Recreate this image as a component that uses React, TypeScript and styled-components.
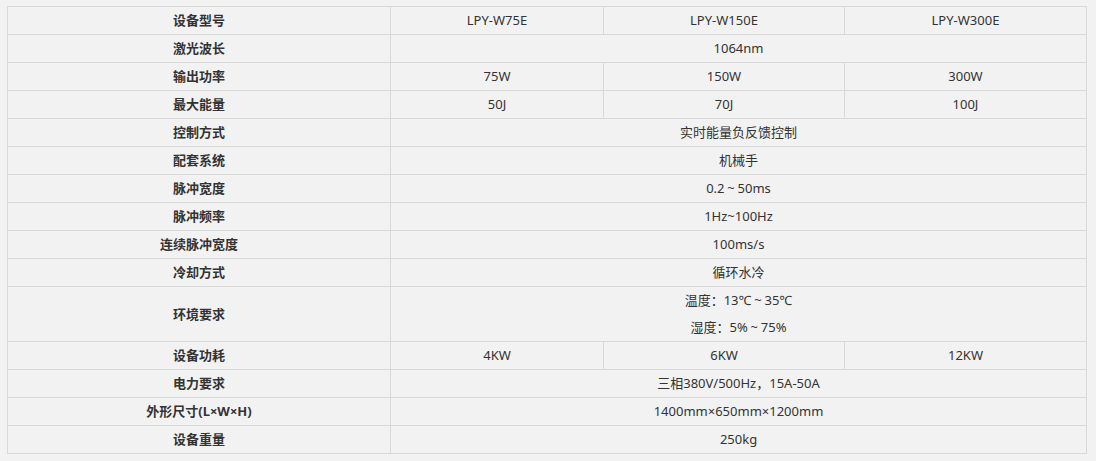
import styled, { createGlobalStyle } from "styled-components";

const GlobalStyle = createGlobalStyle`
  html, body {
    margin: 0;
    background: #f2f2f2;
  }
`;

type Row = {
  label: string;
  values: string[];
};

const rows: Row[] = [
  { label: "设备型号", values: ["LPY-W75E", "LPY-W150E", "LPY-W300E"] },
  { label: "激光波长", values: ["1064nm"] },
  { label: "输出功率", values: ["75W", "150W", "300W"] },
  { label: "最大能量", values: ["50J", "70J", "100J"] },
  { label: "控制方式", values: ["实时能量负反馈控制"] },
  { label: "配套系统", values: ["机械手"] },
  { label: "脉冲宽度", values: ["0.2～50ms"] },
  { label: "脉冲频率", values: ["1Hz~100Hz"] },
  { label: "连续脉冲宽度", values: ["100ms/s"] },
  { label: "冷却方式", values: ["循环水冷"] },
  { label: "环境要求", values: ["温度：13℃～35℃\n湿度：5%～75%"] },
  { label: "设备功耗", values: ["4KW", "6KW", "12KW"] },
  { label: "电力要求", values: ["三相380V/500Hz，15A-50A"] },
  { label: "外形尺寸(L×W×H)", values: ["1400mm×650mm×1200mm"] },
  { label: "设备重量", values: ["250kg"] },
];

const Page = styled.div`
  padding: 6px 9px 7px 7px;
`;

const Table = styled.table`
  width: 100%;
  border-collapse: collapse;
  table-layout: fixed;
  font-family: "Noto Sans", "Noto Sans CJK SC", sans-serif;
  font-size: 13px;
  color: #333;
  background: #f2f2f2;
`;

const Cell = styled.td<{ $head?: boolean }>`
  border: 1px solid #d9d9d9;
  padding: 0;
  line-height: 27px;
  text-align: center;
  vertical-align: middle;
  font-weight: ${(p) => (p.$head ? 700 : 400)};
  white-space: nowrap;
`;

const Line = styled.div`
  height: 27px;
`;

// the fullwidth tilde in the source font is a small centred wave
const Tilde = styled.span`
  display: inline-block;
  width: 13px;
  text-align: center;
  font-family: "Noto Sans", sans-serif;
`;

function renderText(t: string) {
  const parts = t.split("～");
  return parts.map((p, i) => (
    <span key={i}>
      {i > 0 && <Tilde>~</Tilde>}
      {p}
    </span>
  ));
}

export default function App() {
  return (
    <>
      <GlobalStyle />
      <Page>
        <Table>
          <colgroup>
            <col style={{ width: 383 }} />
            <col style={{ width: 213 }} />
            <col style={{ width: 241 }} />
            <col />
          </colgroup>
          <tbody>
            {rows.map((r) => (
              <tr key={r.label}>
                <Cell $head>{r.label}</Cell>
                {r.values.length === 1 ? (
                  <Cell colSpan={3}>
                    {r.values[0].split("\n").map((t) => (
                      <Line key={t}>{renderText(t)}</Line>
                    ))}
                  </Cell>
                ) : (
                  r.values.map((v) => <Cell key={v}>{v}</Cell>)
                )}
              </tr>
            ))}
          </tbody>
        </Table>
      </Page>
    </>
  );
}
